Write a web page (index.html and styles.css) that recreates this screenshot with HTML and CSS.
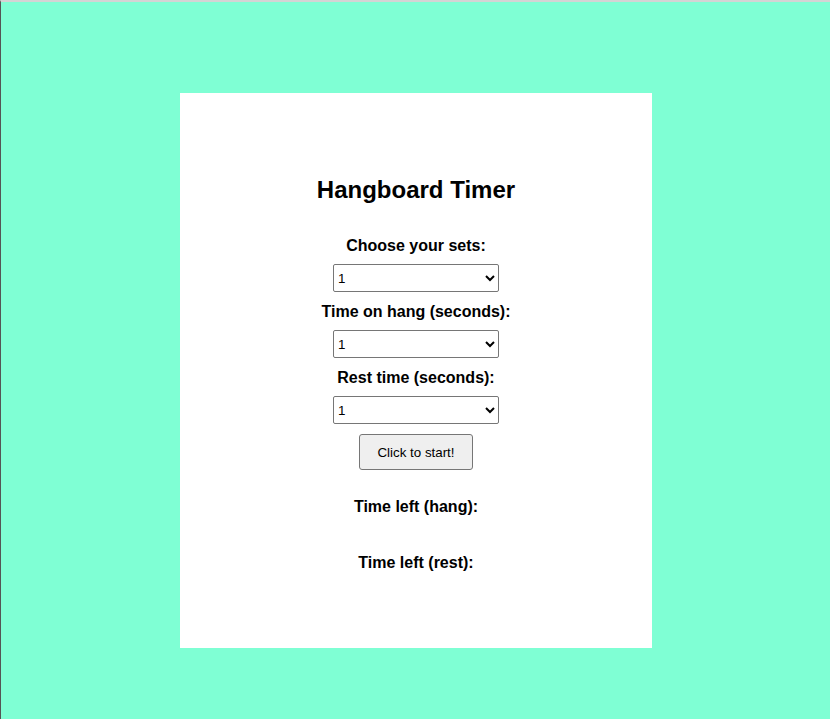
FILE: index.html
```html
<!DOCTYPE html>
<html lang="en">
<head>
    <meta charset="UTF-8">
    <meta name="viewport" content="width=device-width, initial-scale=1.0">
    <title>Hangboard Timer</title>
    <link rel="stylesheet" href="styles.css">
</head>
<body>

    <div class="container">
        <h1>Hangboard Timer</h1>

        <label for="sets">Choose your sets:</label>
        <select id="sets" name="sets">
            <option>1</option>
            <option>2</option>
            <option>3</option>
            <option>4</option>
            <option>5</option>
        </select>

        <label for="hang">Time on hang (seconds):</label>
        <select id="hang" name="hang">
            <option>1</option>
            <option>5</option>
            <option>7</option>
            <option>10</option>
        </select>

        <label for="rest">Rest time (seconds):</label>
        <select id="rest" name="rest">
            <option>1</option>
            <option>30</option>
            <option>60</option>
            <option>120</option>
        </select>

        <button type="button" id="start">Click to start!</button>

        <p class="time-left">Time left (hang):</p>
        <p class="time-value" id="hangLeft"></p>
        <p class="time-left">Time left (rest):</p>
        <p class="time-value" id="restLeft"></p>
    </div>

</body>
</html>
```

FILE: styles.css
```css
html {
    height: 100%;
}
body {
    font-family: "Liberation Sans", Arial, sans-serif;
    margin: 0;
    min-height: 100%;
    box-sizing: border-box;
    background-color: aquamarine;
    border-top: 2px solid #d4d4d4;
    border-left: 1px solid #555;
    padding-top: 91px;
    color: #000;
}
.container {
    width: 472px;
    height: 555px;
    margin-left: 179px;
    box-sizing: border-box;
    padding-top: 83px;
    background-color: #fff;
    display: flex;
    flex-direction: column;
    align-items: center;
}
h1 {
    margin: 0 0 32px;
    font-size: 24px;
    line-height: 28px;
    font-weight: bold;
}
label {
    font-size: 16px;
    font-weight: bold;
    line-height: 20px;
    margin-bottom: 8px;
}
select {
    width: 166px;
    height: 28px;
    margin-bottom: 10px;
    font-family: Arial, "Liberation Sans", sans-serif;
    font-size: 13.33px;
    border: 1px solid #767676;
    border-radius: 2px;
    background-color: #fff;
    color: #000;
}
button {
    width: 114px;
    height: 36px;
    font-family: Arial, "Liberation Sans", sans-serif;
    font-size: 13.33px;
    color: #000;
    background-color: #efefef;
    border: 1px solid #767676;
    border-radius: 3px;
    margin-bottom: 27px;
}
.time-left {
    margin: 0;
    font-size: 16px;
    font-weight: bold;
    line-height: 20px;
}
.time-value {
    margin: 0;
    height: 36px;
}
```
